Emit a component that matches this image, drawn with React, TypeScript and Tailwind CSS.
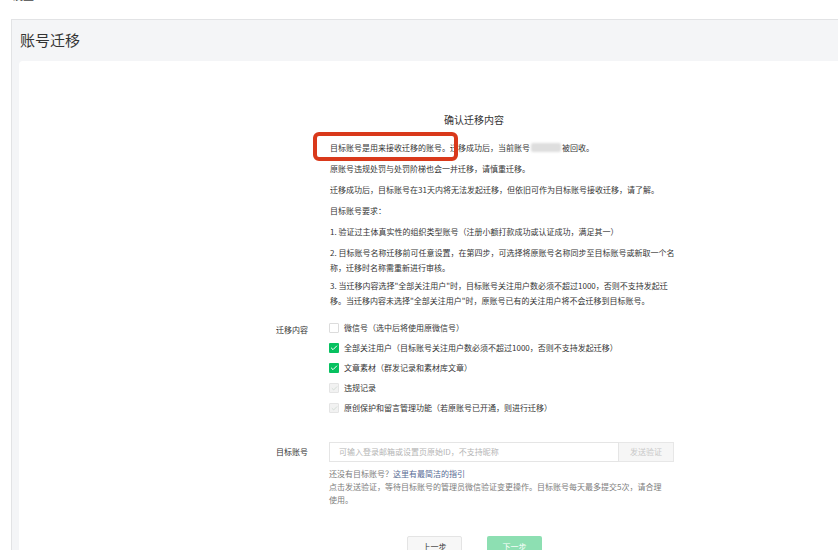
import { Check } from "lucide-react";

const FONT = { fontFamily: '"Noto Sans CJK SC", "Noto Sans", sans-serif' };

const PARAS = [
  "原账号违规处罚与处罚阶梯也会一并迁移，请慎重迁移。",
  "迁移成功后，目标账号在31天内将无法发起迁移，但依旧可作为目标账号接收迁移，请了解。",
  "目标账号要求：",
  "1. 验证过主体真实性的组织类型账号（注册小额打款成功或认证成功，满足其一）",
  "2. 目标账号名称迁移前可任意设置，在第四步，可选择将原账号名称同步至目标账号或新取一个名称，迁移时名称需重新进行审核。",
];

const OPTIONS = [
  { label: "微信号（选中后将使用原微信号）", state: "off" },
  { label: "全部关注用户（目标账号关注用户数必须不超过1000，否则不支持发起迁移）", state: "on" },
  { label: "文章素材（群发记录和素材库文章）", state: "on" },
  { label: "违规记录", state: "locked" },
  { label: "原创保护和留言管理功能（若原账号已开通，则进行迁移）", state: "locked" },
];

function Box({ state }: { state: string }) {
  if (state === "on")
    return (
      <span className="flex h-[10px] w-[10px] items-center justify-center rounded-[1px] bg-[#07c160]">
        <Check size={8} strokeWidth={3} className="text-white" />
      </span>
    );
  if (state === "locked")
    return (
      <span className="flex h-[10px] w-[10px] items-center justify-center rounded-[1px] border border-[#e4e4e4] bg-[#f2f2f2]">
        <Check size={7} strokeWidth={2.5} className="text-[#c9d6ce]" />
      </span>
    );
  return <span className="h-[10px] w-[10px] rounded-[1px] border border-[#dcdcdc] bg-white" />;
}

export default function App() {
  return (
    <div className="min-h-screen bg-white text-[#353535]" style={FONT}>
      <div className="h-[19px] overflow-hidden pl-[12px]">
        <div className="-mt-[11px] flex gap-[36px] text-[11px] leading-[12px] text-[#444]">
          <span>设置</span>
          <span>·</span>
        </div>
      </div>

      <div className="ml-[11px] h-[531px] border-l border-t border-[#e2e3e5] bg-[#f4f5f7] pl-[7px]">
        <div className="flex h-[41px] items-center pl-[1px] text-[15px] text-[#333]">账号迁移</div>

        <div className="relative h-[490px] overflow-hidden rounded-tl-[4px] bg-white pl-[257px]">
          <div className="w-[400px]">
            <div className="mt-[52px] pl-[168px] text-[10px] leading-[14px] text-[#333]">确认迁移内容</div>

            <div className="relative mt-[13px] w-[400px] pl-[54px] text-[8px] leading-[15px]">
              <p className="w-[345px]">
                目标账号是用来接收迁移的账号。迁移成功后，当前账号
                <span className="mx-[1px] inline-block h-[9px] w-[30px] translate-y-[1px] rounded-[2px] bg-[#dedede] blur-[1px]" />
                被回收。
              </p>
              {PARAS.map((t, i) => (
                <p key={i} className="mt-[6px] w-[345px]">
                  {t}
                </p>
              ))}
              <p className="mt-[3px] w-[345px]">
                3. 当迁移内容选择"全部关注用户"时，目标账号关注用户数必须不超过1000，否则不支持发起迁移。当迁移内容未选择"全部关注用户"时，原账号已有的关注用户将不会迁移到目标账号。
              </p>
              <div className="absolute left-[37px] top-[-8px] h-[29px] w-[145px] rounded-[6px] border-[4px] border-[#d9391b]" />
            </div>

            <div className="mt-[10px] flex">
              <div className="w-[53px] pt-[4px] text-[8px] leading-[15px]">迁移内容</div>
              <div className="flex flex-col">
                {OPTIONS.map((o) => (
                  <div key={o.label} className="flex h-[20px] items-center gap-[5px] text-[8px]">
                    <Box state={o.state} />
                    <span>{o.label}</span>
                  </div>
                ))}
              </div>
            </div>

            <div className="mt-[24px] flex">
              <div className="flex h-[20px] w-[53px] items-center text-[8px]">目标账号</div>
              <div className="w-[345px]">
                <div className="flex h-[20px]">
                  <div className="flex w-[290px] items-center border border-[#e5e5e5] pl-[9px] text-[8px] text-[#b5b5b5]">
                    可输入登录邮箱或设置页原始ID，不支持昵称
                  </div>
                  <div className="flex w-[55px] items-center justify-center border border-l-0 border-[#e7e7e7] bg-[#f6f6f6] text-[8px] text-[#c8c8c8]">
                    发送验证
                  </div>
                </div>
                <div className="mt-[5px] text-[8px] leading-[13px] text-[#7d7d7d]">
                  <p>
                    还没有目标账号？<span className="text-[#576b95]">这里有最简洁的指引</span>
                  </p>
                  <p className="w-[340px]">点击发送验证，等待目标账号的管理员微信验证变更操作。目标账号每天最多提交5次，请合理使用。</p>
                </div>
              </div>
            </div>

            <div className="mt-[30px] flex gap-[25px] pl-[131px]">
              <div className="flex h-[22px] w-[55px] items-center justify-center rounded-[2px] border border-[#e4e4e4] bg-[#f7f7f7] text-[8px] text-[#353535]">
                上一步
              </div>
              <div className="flex h-[22px] w-[55px] items-center justify-center rounded-[2px] bg-[#8ddfb2] text-[8px] text-white">
                下一步
              </div>
            </div>
          </div>
        </div>
      </div>
    </div>
  );
}
